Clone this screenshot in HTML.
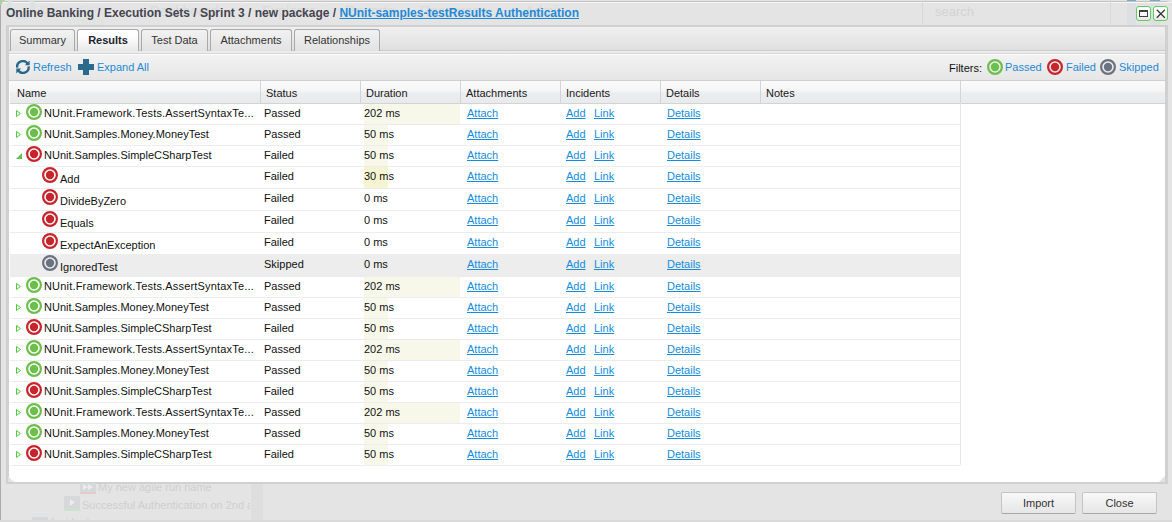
<!DOCTYPE html>
<html><head><meta charset="utf-8">
<style>
html,body{margin:0;padding:0;}
body{width:1172px;height:522px;overflow:hidden;position:relative;background:#e3e3e3;font-family:"Liberation Sans",sans-serif;}
.abs{position:absolute;}
#frame{position:absolute;left:0;top:1px;width:1171px;height:521px;border-left:1px solid #ababab;border-top:1px solid #c2c2c2;border-radius:5px 5px 0 0;background:#e4e4e4;box-sizing:border-box;}
#frame2{position:absolute;left:1px;top:2px;width:1171px;height:1px;background:#f6f6f6;}
#title{position:absolute;left:6px;top:6px;font-size:12px;font-weight:bold;color:#454550;white-space:nowrap;line-height:14px;}
#title a{color:#1e8ad6;text-decoration:underline;}
.wbtn{position:absolute;top:6px;width:15px;height:15px;border:1px solid #5fcc5f;border-radius:3px;background:linear-gradient(#ffffff 40%,#e8e8e8);box-sizing:border-box;}
.wbtn svg{position:absolute;left:0;top:0;}
#tabpanel{position:absolute;left:6px;top:25px;width:1162px;height:459px;background:#d0d0d0;}
#tabstrip{position:absolute;left:9px;top:27px;width:1156px;height:23px;background:linear-gradient(#f0f0f0,#e0e0e0);border-bottom:1px solid #cccccc;}
#tabsep{position:absolute;left:9px;top:51px;width:1156px;height:2px;background:#ececec;border-bottom:1px solid #d6d6d6;}
.tab{position:absolute;top:29px;height:22px;border:1px solid #a9a9a9;border-bottom:none;border-radius:3px 3px 0 0;background:linear-gradient(#f2f2f2,#e2e2e2);font-size:11px;color:#333;text-align:center;line-height:21px;box-sizing:border-box;}
.tab.act{background:linear-gradient(#ffffff 30%,#e8e8e8);font-weight:bold;height:22px;top:29px;color:#22222c;}
#toolbar{position:absolute;left:9px;top:54px;width:1156px;height:27px;background:linear-gradient(#f2f2f2,#e6e6e6);border-top:1px solid #fcfcfc;border-bottom:1px solid #d0d0d0;box-sizing:border-box;}
#grid{position:absolute;left:9px;top:81px;width:1156px;height:401px;background:#fff;}
#hdr{position:absolute;left:10px;top:81px;width:1155px;height:23px;background:linear-gradient(#fbfbfb 0%,#f5f5f6 45%,#ecedef 55%,#e9eaec 100%);border-bottom:1px solid #d2d3d5;box-sizing:border-box;}
.hc{position:absolute;top:0;height:22px;border-left:1px solid #d4d4d6;font-size:11px;color:#1a1a22;line-height:25px;padding-left:5px;box-sizing:border-box;}
.row{position:absolute;left:0;width:950px;border-bottom:1px solid #ededed;}
.row.sel{background:#ededed;}
.t{position:absolute;font-size:11px;color:#111;white-space:nowrap;line-height:13px;}
.a{color:#158ddc;text-decoration:underline;}
.ic{position:absolute;}
.exp{position:absolute;}
.bar{position:absolute;top:0;background:#f7f8ea;}
.btn{position:absolute;top:492px;height:22px;border:1px solid #c4c4c4;border-bottom-color:#a8a8a8;border-radius:2px;background:linear-gradient(#f8f8f8,#e6e6e6);font-size:11px;color:#333;text-align:center;line-height:21px;box-sizing:border-box;}
.ghost{position:absolute;font-size:11px;color:#cfcfd2;white-space:nowrap;line-height:13px;}
.gicon{position:absolute;width:16px;height:16px;background:#d6d8da;}
</style></head><body>
<div id="frame"></div>
<div id="frame2"></div>
<svg class="abs" style="left:0;top:0" width="6" height="6" viewBox="0 0 6 6"><path d="M0 0 H5 L0 5 Z" fill="#b5cda5"/></svg>
<div class="abs" style="left:922px;top:0;width:1px;height:25px;background:#d9d9d9"></div>
<div class="abs" style="left:1110px;top:0;width:1px;height:25px;background:#d9d9d9"></div>
<span class="ghost" style="left:935px;top:4px;font-size:13px;color:#d3d3d3;line-height:16px">search</span>
<div class="abs" style="left:1127px;top:3px;width:9px;height:22px;background:#dde0e3"></div>
<div class="abs" style="left:1150px;top:3px;width:10px;height:22px;background:#dde0e3"></div>
<div class="abs" style="left:1127px;top:0;width:9px;height:1px;background:#7aa9cc"></div>
<div class="abs" style="left:1150px;top:0;width:10px;height:1px;background:#7aa9cc"></div>
<svg class="abs" style="left:4px;top:0px" width="36" height="26" viewBox="0 0 36 26"><circle cx="17" cy="6" r="12" fill="none" stroke="#dbe2e2" stroke-width="4"/></svg>
<span class="ghost" style="left:40px;top:1px;font-size:17px;color:#dde1e3;line-height:18px">nterprise</span>
<span class="ghost" style="left:68px;top:13px;font-size:15px;color:#dde3dd;line-height:16px">tester</span>
<span class="ghost" style="left:150px;top:3px;font-size:14px;color:#dadada;line-height:16px">Dashboard</span>
<span class="ghost" style="left:262px;top:3px;font-size:14px;color:#dadada;line-height:16px">Explorer</span>
<span class="ghost" style="left:345px;top:3px;font-size:14px;color:#dadada;line-height:16px">Reports</span>
<span class="ghost" style="left:420px;top:3px;font-size:14px;color:#dadada;line-height:16px">Resources</span>
<span class="ghost" style="left:525px;top:3px;font-size:14px;color:#dadada;line-height:16px">Admin</span>
<div class="abs" style="left:247px;top:0;width:1px;height:2px;background:#d4d4d4"></div>
<div class="abs" style="left:325px;top:0;width:1px;height:2px;background:#d4d4d4"></div>
<div id="title">Online Banking / Execution Sets / Sprint 3 / new package / <a>NUnit-samples-testResults Authentication</a></div>
<div class="wbtn" style="left:1136px"><svg width="15" height="15" viewBox="0 0 15 15"><rect x="2.5" y="3.5" width="8" height="6" fill="none" stroke="#404040" stroke-width="1"/><rect x="2" y="3" width="9" height="2" fill="#404040"/></svg></div>
<div class="wbtn" style="left:1153px"><svg width="15" height="15" viewBox="0 0 15 15"><path d="M2.8 2.8 L10.8 10.8 M10.8 2.8 L2.8 10.8" stroke="#333" stroke-width="1.25"/></svg></div>
<div id="tabpanel"></div>
<div id="tabstrip"></div>
<div id="tabsep"></div>
<div class="tab" style="left:10px;width:65px">Summary</div>
<div class="tab act" style="left:77px;width:62px">Results</div>
<div class="tab" style="left:141px;width:67px">Test Data</div>
<div class="tab" style="left:210px;width:82px">Attachments</div>
<div class="tab" style="left:294px;width:86px">Relationships</div>
<div id="toolbar"></div>
<svg class="abs" style="left:16px;top:60px" width="14" height="14" viewBox="0 0 14 14"><path d="M1.2 7.6 A5.7 5.7 0 0 1 11.9 4.2" fill="none" stroke="#27688a" stroke-width="2.4"/><path d="M12.6 6.4 A5.7 5.7 0 0 1 1.9 9.8" fill="none" stroke="#27688a" stroke-width="2.4"/><path d="M8.8 5.3 L13.7 5.3 L13.7 0.4 Z" fill="#27688a"/><path d="M0.3 8.6 L5.2 8.6 L0.3 13.5 Z" fill="#27688a"/></svg>
<span class="t" style="left:33px;top:61px;color:#1e8ad6;font-size:11px">Refresh</span>
<svg class="abs" style="left:78px;top:59px" width="16" height="16" viewBox="0 0 16 16"><path d="M5 0 H11 V5 H16 V11 H11 V16 H5 V11 H0 V5 H5 Z" fill="#2a6b8c"/></svg>
<span class="t" style="left:97px;top:61px;color:#1e8ad6;font-size:11px">Expand All</span>
<span class="t" style="left:949px;top:62px;color:#111;font-size:11px">Filters:</span>
<svg class="ic" style="left:987px;top:59px" width="16" height="16" viewBox="0 0 16 16"><circle cx="8" cy="8" r="6.9" fill="none" stroke="#6cbf4a" stroke-width="2.2"/><circle cx="8" cy="8" r="4.2" fill="#6cbf4a"/></svg>
<span class="t" style="left:1005px;top:61px;color:#1e8ad6;font-size:11px">Passed</span>
<svg class="ic" style="left:1047px;top:59px" width="16" height="16" viewBox="0 0 16 16"><circle cx="8" cy="8" r="6.9" fill="none" stroke="#c8242b" stroke-width="2.2"/><circle cx="8" cy="8" r="4.2" fill="#c8242b"/></svg>
<span class="t" style="left:1066px;top:61px;color:#1e8ad6;font-size:11px">Failed</span>
<svg class="ic" style="left:1100px;top:59px" width="16" height="16" viewBox="0 0 16 16"><circle cx="8" cy="8" r="6.9" fill="none" stroke="#6b7280" stroke-width="2.2"/><circle cx="8" cy="8" r="4.2" fill="#6b7280"/></svg>
<span class="t" style="left:1119px;top:61px;color:#1e8ad6;font-size:11px">Skipped</span>
<div id="grid"></div>
<div id="hdr">
    <div class="hc" style="left:0;width:250px;border-left:none;padding-left:7px">Name</div>
    <div class="hc" style="left:250px;width:100px">Status</div>
    <div class="hc" style="left:350px;width:100px">Duration</div>
    <div class="hc" style="left:450px;width:100px">Attachments</div>
    <div class="hc" style="left:550px;width:100px">Incidents</div>
    <div class="hc" style="left:650px;width:100px">Details</div>
    <div class="hc" style="left:750px;width:200px">Notes</div>
    <div class="hc" style="left:950px;width:205px"></div>
</div>
<div class="abs" style="left:10px;top:0;width:0;height:0">
<div class="row" style="top:104px;height:20px"><div class="bar" style="left:354px;width:96px;height:20px;background:#f8f8ea"></div><svg class="exp" style="left:5px;top:5px" width="8" height="9" viewBox="0 0 8 9"><path d="M1.5 1.5 L5.5 4.5 L1.5 7.5 Z" fill="none" stroke="#4fcc3a" stroke-width="1"/></svg><svg class="ic" style="left:16px;top:0px" width="16" height="16" viewBox="0 0 16 16"><circle cx="8" cy="8" r="6.9" fill="none" stroke="#6cbf4a" stroke-width="2.2"/><circle cx="8" cy="8" r="4.2" fill="#6cbf4a"/></svg><span class="t nm" style="left:34px;top:3px;letter-spacing:0.18px">NUnit.Framework.Tests.AssertSyntaxTe...</span><span class="t" style="left:254px;top:3px">Passed</span><span class="t" style="left:354px;top:3px">202 ms</span><span class="t a" style="left:457px;top:3px">Attach</span><span class="t a" style="left:556px;top:3px">Add</span><span class="t a" style="left:584px;top:3px">Link</span><span class="t a" style="left:657px;top:3px">Details</span></div>
<div class="row" style="top:125px;height:20px"><div class="bar" style="left:354px;width:24px;height:20px;background:#f8f8ea"></div><svg class="exp" style="left:5px;top:5px" width="8" height="9" viewBox="0 0 8 9"><path d="M1.5 1.5 L5.5 4.5 L1.5 7.5 Z" fill="none" stroke="#4fcc3a" stroke-width="1"/></svg><svg class="ic" style="left:16px;top:0px" width="16" height="16" viewBox="0 0 16 16"><circle cx="8" cy="8" r="6.9" fill="none" stroke="#6cbf4a" stroke-width="2.2"/><circle cx="8" cy="8" r="4.2" fill="#6cbf4a"/></svg><span class="t nm" style="left:34px;top:3px">NUnit.Samples.Money.MoneyTest</span><span class="t" style="left:254px;top:3px">Passed</span><span class="t" style="left:354px;top:3px">50 ms</span><span class="t a" style="left:457px;top:3px">Attach</span><span class="t a" style="left:556px;top:3px">Add</span><span class="t a" style="left:584px;top:3px">Link</span><span class="t a" style="left:657px;top:3px">Details</span></div>
<div class="row" style="top:146px;height:20px"><div class="bar" style="left:354px;width:24px;height:20px;background:#f8f8ea"></div><svg class="exp" style="left:5px;top:6px" width="8" height="8" viewBox="0 0 8 8"><path d="M1 7 L7 7 L7 1 Z" fill="#5fc24a"/></svg><svg class="ic" style="left:16px;top:0px" width="16" height="16" viewBox="0 0 16 16"><circle cx="8" cy="8" r="6.9" fill="none" stroke="#c8242b" stroke-width="2.2"/><circle cx="8" cy="8" r="4.2" fill="#c8242b"/></svg><span class="t nm" style="left:34px;top:3px">NUnit.Samples.SimpleCSharpTest</span><span class="t" style="left:254px;top:3px">Failed</span><span class="t" style="left:354px;top:3px">50 ms</span><span class="t a" style="left:457px;top:3px">Attach</span><span class="t a" style="left:556px;top:3px">Add</span><span class="t a" style="left:584px;top:3px">Link</span><span class="t a" style="left:657px;top:3px">Details</span></div>
<div class="row" style="top:167px;height:21px"><div class="bar" style="left:354px;width:24px;height:21px;background:#f6f5d2"></div><svg class="ic" style="left:32px;top:0px" width="16" height="16" viewBox="0 0 16 16"><circle cx="8" cy="8" r="6.9" fill="none" stroke="#c8242b" stroke-width="2.2"/><circle cx="8" cy="8" r="4.2" fill="#c8242b"/></svg><span class="t nm" style="left:50px;top:6px">Add</span><span class="t" style="left:254px;top:3px">Failed</span><span class="t" style="left:354px;top:3px">30 ms</span><span class="t a" style="left:457px;top:3px">Attach</span><span class="t a" style="left:556px;top:3px">Add</span><span class="t a" style="left:584px;top:3px">Link</span><span class="t a" style="left:657px;top:3px">Details</span></div>
<div class="row" style="top:189px;height:21px"><svg class="ic" style="left:32px;top:0px" width="16" height="16" viewBox="0 0 16 16"><circle cx="8" cy="8" r="6.9" fill="none" stroke="#c8242b" stroke-width="2.2"/><circle cx="8" cy="8" r="4.2" fill="#c8242b"/></svg><span class="t nm" style="left:50px;top:6px">DivideByZero</span><span class="t" style="left:254px;top:3px">Failed</span><span class="t" style="left:354px;top:3px">0 ms</span><span class="t a" style="left:457px;top:3px">Attach</span><span class="t a" style="left:556px;top:3px">Add</span><span class="t a" style="left:584px;top:3px">Link</span><span class="t a" style="left:657px;top:3px">Details</span></div>
<div class="row" style="top:211px;height:21px"><svg class="ic" style="left:32px;top:0px" width="16" height="16" viewBox="0 0 16 16"><circle cx="8" cy="8" r="6.9" fill="none" stroke="#c8242b" stroke-width="2.2"/><circle cx="8" cy="8" r="4.2" fill="#c8242b"/></svg><span class="t nm" style="left:50px;top:6px">Equals</span><span class="t" style="left:254px;top:3px">Failed</span><span class="t" style="left:354px;top:3px">0 ms</span><span class="t a" style="left:457px;top:3px">Attach</span><span class="t a" style="left:556px;top:3px">Add</span><span class="t a" style="left:584px;top:3px">Link</span><span class="t a" style="left:657px;top:3px">Details</span></div>
<div class="row" style="top:233px;height:21px"><svg class="ic" style="left:32px;top:0px" width="16" height="16" viewBox="0 0 16 16"><circle cx="8" cy="8" r="6.9" fill="none" stroke="#c8242b" stroke-width="2.2"/><circle cx="8" cy="8" r="4.2" fill="#c8242b"/></svg><span class="t nm" style="left:50px;top:6px">ExpectAnException</span><span class="t" style="left:254px;top:3px">Failed</span><span class="t" style="left:354px;top:3px">0 ms</span><span class="t a" style="left:457px;top:3px">Attach</span><span class="t a" style="left:556px;top:3px">Add</span><span class="t a" style="left:584px;top:3px">Link</span><span class="t a" style="left:657px;top:3px">Details</span></div>
<div class="row sel" style="top:255px;height:21px"><svg class="ic" style="left:32px;top:0px" width="16" height="16" viewBox="0 0 16 16"><circle cx="8" cy="8" r="6.9" fill="none" stroke="#6b7280" stroke-width="2.2"/><circle cx="8" cy="8" r="4.2" fill="#6b7280"/></svg><span class="t nm" style="left:50px;top:6px">IgnoredTest</span><span class="t" style="left:254px;top:3px">Skipped</span><span class="t" style="left:354px;top:3px">0 ms</span><span class="t a" style="left:457px;top:3px">Attach</span><span class="t a" style="left:556px;top:3px">Add</span><span class="t a" style="left:584px;top:3px">Link</span><span class="t a" style="left:657px;top:3px">Details</span></div>
<div class="row" style="top:277px;height:20px"><div class="bar" style="left:354px;width:96px;height:20px;background:#f8f8ea"></div><svg class="exp" style="left:5px;top:5px" width="8" height="9" viewBox="0 0 8 9"><path d="M1.5 1.5 L5.5 4.5 L1.5 7.5 Z" fill="none" stroke="#4fcc3a" stroke-width="1"/></svg><svg class="ic" style="left:16px;top:0px" width="16" height="16" viewBox="0 0 16 16"><circle cx="8" cy="8" r="6.9" fill="none" stroke="#6cbf4a" stroke-width="2.2"/><circle cx="8" cy="8" r="4.2" fill="#6cbf4a"/></svg><span class="t nm" style="left:34px;top:3px;letter-spacing:0.18px">NUnit.Framework.Tests.AssertSyntaxTe...</span><span class="t" style="left:254px;top:3px">Passed</span><span class="t" style="left:354px;top:3px">202 ms</span><span class="t a" style="left:457px;top:3px">Attach</span><span class="t a" style="left:556px;top:3px">Add</span><span class="t a" style="left:584px;top:3px">Link</span><span class="t a" style="left:657px;top:3px">Details</span></div>
<div class="row" style="top:298px;height:20px"><div class="bar" style="left:354px;width:24px;height:20px;background:#f8f8ea"></div><svg class="exp" style="left:5px;top:5px" width="8" height="9" viewBox="0 0 8 9"><path d="M1.5 1.5 L5.5 4.5 L1.5 7.5 Z" fill="none" stroke="#4fcc3a" stroke-width="1"/></svg><svg class="ic" style="left:16px;top:0px" width="16" height="16" viewBox="0 0 16 16"><circle cx="8" cy="8" r="6.9" fill="none" stroke="#6cbf4a" stroke-width="2.2"/><circle cx="8" cy="8" r="4.2" fill="#6cbf4a"/></svg><span class="t nm" style="left:34px;top:3px">NUnit.Samples.Money.MoneyTest</span><span class="t" style="left:254px;top:3px">Passed</span><span class="t" style="left:354px;top:3px">50 ms</span><span class="t a" style="left:457px;top:3px">Attach</span><span class="t a" style="left:556px;top:3px">Add</span><span class="t a" style="left:584px;top:3px">Link</span><span class="t a" style="left:657px;top:3px">Details</span></div>
<div class="row" style="top:319px;height:20px"><div class="bar" style="left:354px;width:24px;height:20px;background:#f8f8ea"></div><svg class="exp" style="left:5px;top:5px" width="8" height="9" viewBox="0 0 8 9"><path d="M1.5 1.5 L5.5 4.5 L1.5 7.5 Z" fill="none" stroke="#4fcc3a" stroke-width="1"/></svg><svg class="ic" style="left:16px;top:0px" width="16" height="16" viewBox="0 0 16 16"><circle cx="8" cy="8" r="6.9" fill="none" stroke="#c8242b" stroke-width="2.2"/><circle cx="8" cy="8" r="4.2" fill="#c8242b"/></svg><span class="t nm" style="left:34px;top:3px">NUnit.Samples.SimpleCSharpTest</span><span class="t" style="left:254px;top:3px">Failed</span><span class="t" style="left:354px;top:3px">50 ms</span><span class="t a" style="left:457px;top:3px">Attach</span><span class="t a" style="left:556px;top:3px">Add</span><span class="t a" style="left:584px;top:3px">Link</span><span class="t a" style="left:657px;top:3px">Details</span></div>
<div class="row" style="top:340px;height:20px"><div class="bar" style="left:354px;width:96px;height:20px;background:#f8f8ea"></div><svg class="exp" style="left:5px;top:5px" width="8" height="9" viewBox="0 0 8 9"><path d="M1.5 1.5 L5.5 4.5 L1.5 7.5 Z" fill="none" stroke="#4fcc3a" stroke-width="1"/></svg><svg class="ic" style="left:16px;top:0px" width="16" height="16" viewBox="0 0 16 16"><circle cx="8" cy="8" r="6.9" fill="none" stroke="#6cbf4a" stroke-width="2.2"/><circle cx="8" cy="8" r="4.2" fill="#6cbf4a"/></svg><span class="t nm" style="left:34px;top:3px;letter-spacing:0.18px">NUnit.Framework.Tests.AssertSyntaxTe...</span><span class="t" style="left:254px;top:3px">Passed</span><span class="t" style="left:354px;top:3px">202 ms</span><span class="t a" style="left:457px;top:3px">Attach</span><span class="t a" style="left:556px;top:3px">Add</span><span class="t a" style="left:584px;top:3px">Link</span><span class="t a" style="left:657px;top:3px">Details</span></div>
<div class="row" style="top:361px;height:20px"><div class="bar" style="left:354px;width:24px;height:20px;background:#f8f8ea"></div><svg class="exp" style="left:5px;top:5px" width="8" height="9" viewBox="0 0 8 9"><path d="M1.5 1.5 L5.5 4.5 L1.5 7.5 Z" fill="none" stroke="#4fcc3a" stroke-width="1"/></svg><svg class="ic" style="left:16px;top:0px" width="16" height="16" viewBox="0 0 16 16"><circle cx="8" cy="8" r="6.9" fill="none" stroke="#6cbf4a" stroke-width="2.2"/><circle cx="8" cy="8" r="4.2" fill="#6cbf4a"/></svg><span class="t nm" style="left:34px;top:3px">NUnit.Samples.Money.MoneyTest</span><span class="t" style="left:254px;top:3px">Passed</span><span class="t" style="left:354px;top:3px">50 ms</span><span class="t a" style="left:457px;top:3px">Attach</span><span class="t a" style="left:556px;top:3px">Add</span><span class="t a" style="left:584px;top:3px">Link</span><span class="t a" style="left:657px;top:3px">Details</span></div>
<div class="row" style="top:382px;height:20px"><div class="bar" style="left:354px;width:24px;height:20px;background:#f8f8ea"></div><svg class="exp" style="left:5px;top:5px" width="8" height="9" viewBox="0 0 8 9"><path d="M1.5 1.5 L5.5 4.5 L1.5 7.5 Z" fill="none" stroke="#4fcc3a" stroke-width="1"/></svg><svg class="ic" style="left:16px;top:0px" width="16" height="16" viewBox="0 0 16 16"><circle cx="8" cy="8" r="6.9" fill="none" stroke="#c8242b" stroke-width="2.2"/><circle cx="8" cy="8" r="4.2" fill="#c8242b"/></svg><span class="t nm" style="left:34px;top:3px">NUnit.Samples.SimpleCSharpTest</span><span class="t" style="left:254px;top:3px">Failed</span><span class="t" style="left:354px;top:3px">50 ms</span><span class="t a" style="left:457px;top:3px">Attach</span><span class="t a" style="left:556px;top:3px">Add</span><span class="t a" style="left:584px;top:3px">Link</span><span class="t a" style="left:657px;top:3px">Details</span></div>
<div class="row" style="top:403px;height:20px"><div class="bar" style="left:354px;width:96px;height:20px;background:#f8f8ea"></div><svg class="exp" style="left:5px;top:5px" width="8" height="9" viewBox="0 0 8 9"><path d="M1.5 1.5 L5.5 4.5 L1.5 7.5 Z" fill="none" stroke="#4fcc3a" stroke-width="1"/></svg><svg class="ic" style="left:16px;top:0px" width="16" height="16" viewBox="0 0 16 16"><circle cx="8" cy="8" r="6.9" fill="none" stroke="#6cbf4a" stroke-width="2.2"/><circle cx="8" cy="8" r="4.2" fill="#6cbf4a"/></svg><span class="t nm" style="left:34px;top:3px;letter-spacing:0.18px">NUnit.Framework.Tests.AssertSyntaxTe...</span><span class="t" style="left:254px;top:3px">Passed</span><span class="t" style="left:354px;top:3px">202 ms</span><span class="t a" style="left:457px;top:3px">Attach</span><span class="t a" style="left:556px;top:3px">Add</span><span class="t a" style="left:584px;top:3px">Link</span><span class="t a" style="left:657px;top:3px">Details</span></div>
<div class="row" style="top:424px;height:20px"><div class="bar" style="left:354px;width:24px;height:20px;background:#f8f8ea"></div><svg class="exp" style="left:5px;top:5px" width="8" height="9" viewBox="0 0 8 9"><path d="M1.5 1.5 L5.5 4.5 L1.5 7.5 Z" fill="none" stroke="#4fcc3a" stroke-width="1"/></svg><svg class="ic" style="left:16px;top:0px" width="16" height="16" viewBox="0 0 16 16"><circle cx="8" cy="8" r="6.9" fill="none" stroke="#6cbf4a" stroke-width="2.2"/><circle cx="8" cy="8" r="4.2" fill="#6cbf4a"/></svg><span class="t nm" style="left:34px;top:3px">NUnit.Samples.Money.MoneyTest</span><span class="t" style="left:254px;top:3px">Passed</span><span class="t" style="left:354px;top:3px">50 ms</span><span class="t a" style="left:457px;top:3px">Attach</span><span class="t a" style="left:556px;top:3px">Add</span><span class="t a" style="left:584px;top:3px">Link</span><span class="t a" style="left:657px;top:3px">Details</span></div>
<div class="row" style="top:445px;height:20px"><div class="bar" style="left:354px;width:24px;height:20px;background:#f8f8ea"></div><svg class="exp" style="left:5px;top:5px" width="8" height="9" viewBox="0 0 8 9"><path d="M1.5 1.5 L5.5 4.5 L1.5 7.5 Z" fill="none" stroke="#4fcc3a" stroke-width="1"/></svg><svg class="ic" style="left:16px;top:0px" width="16" height="16" viewBox="0 0 16 16"><circle cx="8" cy="8" r="6.9" fill="none" stroke="#c8242b" stroke-width="2.2"/><circle cx="8" cy="8" r="4.2" fill="#c8242b"/></svg><span class="t nm" style="left:34px;top:3px">NUnit.Samples.SimpleCSharpTest</span><span class="t" style="left:254px;top:3px">Failed</span><span class="t" style="left:354px;top:3px">50 ms</span><span class="t a" style="left:457px;top:3px">Attach</span><span class="t a" style="left:556px;top:3px">Add</span><span class="t a" style="left:584px;top:3px">Link</span><span class="t a" style="left:657px;top:3px">Details</span></div>
</div>
<div class="abs" style="left:960px;top:103px;width:1px;height:362px;background:#e6e6e6"></div>
<div class="abs" style="left:0;top:483px;width:250px;height:39px;overflow:hidden">
<div class="gicon" style="left:80px;top:0px;border-bottom:2px solid #e8cccc;height:9px"><svg width="16" height="9" viewBox="0 0 16 9" style="position:absolute;left:0;top:0"><path d="M3 1 L8 4 L3 7 Z M8 1 L13 4 L8 7 Z" fill="#ececec"/></svg></div>
<span class="ghost" style="left:98px;top:-2px">My new agile run name</span>
<div class="gicon" style="left:64px;top:13px;border-bottom:2px solid #cde3cd;height:13px"><svg width="16" height="13" viewBox="0 0 16 13" style="position:absolute;left:0;top:0"><path d="M6 3 L11 6.5 L6 10 Z" fill="#ececec"/></svg></div>
<span class="ghost" style="left:82px;top:16px">Successful Authentication on 2nd a</span>
<div class="gicon" style="left:32px;top:34px;height:5px"></div>
<span class="ghost" style="left:51px;top:33px;color:#d2cdd8">Incidents</span>
</div>
<div class="abs" style="left:251px;top:484px;width:12px;height:36px;background:#dedede"></div>
<svg class="abs" style="left:1159px;top:476px" width="6" height="6" viewBox="0 0 6 6"><path d="M6 0 L6 6 L0 6 Z" fill="#e2e2e2"/></svg>
<svg class="abs" style="left:8px;top:476px" width="6" height="6" viewBox="0 0 6 6"><path d="M0 0 L6 6 L0 6 Z" fill="#e2e2e2"/></svg>
<div class="abs" style="left:0;top:520px;width:1172px;height:2px;background:#dadada"></div>
<div class="btn" style="left:1001px;width:75px">Import</div>
<div class="btn" style="left:1082px;width:75px">Close</div>
</body></html>
